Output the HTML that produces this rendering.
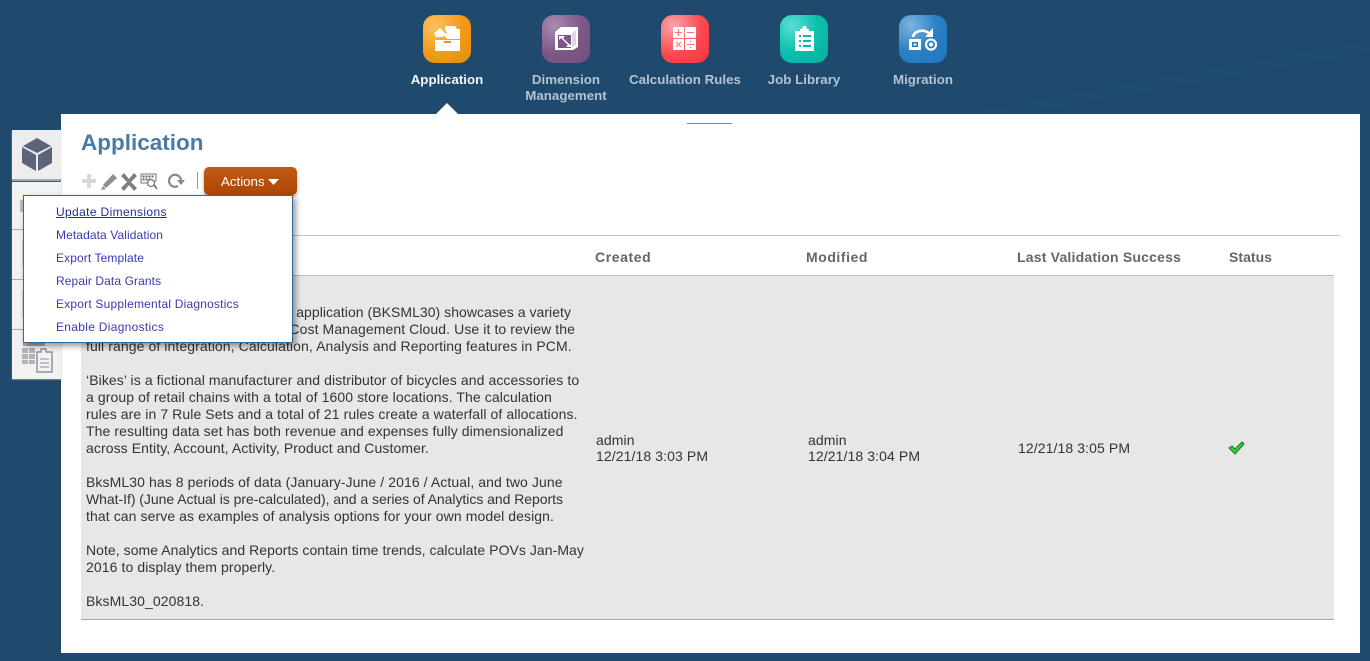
<!DOCTYPE html>
<html><head><meta charset="utf-8"><title>Application</title>
<style>
html,body{margin:0;padding:0}
body{width:1370px;height:661px;position:relative;overflow:hidden;background:#1f4a6e;font-family:"Liberation Sans",Arial,sans-serif;}
.a{position:absolute;white-space:nowrap}
.ic{position:absolute;top:15px;width:48px;height:48px;border-radius:12px;overflow:hidden}
.ic svg{position:absolute;left:0;top:0}
.nl{position:absolute;top:72px;width:140px;text-align:center;font-size:13.3px;line-height:16px;font-weight:bold;color:#b4c2d1;letter-spacing:.02px}
.t{position:absolute;left:86px;font-size:14px;line-height:17px;color:#333;white-space:nowrap;letter-spacing:.09px}
.th{position:absolute;top:249px;font-size:14px;line-height:16px;font-weight:bold;color:#666;letter-spacing:.2px;white-space:nowrap}
.m{position:absolute;left:32px;font-size:12px;line-height:14px;color:#3a3ab0;white-space:nowrap;letter-spacing:.2px}
.d{position:absolute;font-size:14px;line-height:16px;color:#333;white-space:nowrap;letter-spacing:.1px}
</style></head>
<body>
<svg class="a" style="left:0;top:0" width="1370" height="114"><path d="M960 114L1370 40V52L1020 114Z" fill="#24507a" opacity=".25"/></svg>

<div class="ic" style="left:423px;background:radial-gradient(circle at 25% 22%,#ffc05e 0,#f59c1c 50%,#e58a08 100%)">
<svg width="48" height="48"><path d="M22 11h10l2 3h3v10H24l-3-4 3-2-2-3z" fill="#fff"/><path d="M11 18l6-5 6 6-3 3h-7z" fill="#fff"/><path d="M12 25h25v11H12z" fill="#fff"/><path d="M21 26h7v2h-7z" fill="#ef9210"/></svg></div>
<div class="ic" style="left:542px;background:radial-gradient(circle at 25% 22%,#a98bb0 0,#7d5686 55%,#74507e 100%)">
<svg width="48" height="48"><path d="M13 17l6-5h17v20l-5 3H13z" fill="#fff"/><path d="M16 20h13v13H16z" fill="#7d5686"/><path d="M30 18l4-3v15l-4 2z" fill="#7d5686" opacity=".25"/><path d="M17 21h6l-2 2 7 7 2-2v4h-6l2-2-7-7-2 2z" fill="#fff"/></svg></div>
<div class="ic" style="left:661px;background:radial-gradient(circle at 25% 22%,#fda4aa 0,#fb4a52 55%,#f8333c 100%)">
<svg width="48" height="48"><path d="M12 12h11v11H12zM24 12h11v11H24zM12 24h11v11H12zM24 24h11v11H24z" fill="#fff"/><path d="M14 17.500h7M17.500 14v7M26 17.500h7M15 27l5 5M20 27l-5 5M26 29.500h7" stroke="#fb7078" fill="none"/><path d="M29 26h1v1h-1zM29 32h1v1h-1z" fill="#fb7078"/></svg></div>
<div class="ic" style="left:780px;background:radial-gradient(circle at 25% 22%,#58e0d2 0,#0cbfad 50%,#0aae9e 100%)">
<svg width="48" height="48"><path d="M15 16h5v-2h2l1-3h3l1 3h2v2h5v20H15z" fill="#fff"/><path d="M19 20h2v2h-2zM23 20h8v2h-8zM19 25h2v2h-2zM23 25h8v2h-8zM19 30h2v2h-2zM23 30h8v2h-8z" fill="#0cb8a8"/></svg></div>
<div class="ic" style="left:899px;background:radial-gradient(circle at 25% 22%,#7cb4e0 0,#2a80c4 50%,#1f76be 100%)">
<svg width="48" height="48"><path d="M10 24h12v11H10z" fill="#fff"/><path d="M13 27h6v5h-6z" fill="#2078c0"/><path d="M14.500 28.500h3v2h-3z" fill="#fff"/><circle cx="32" cy="29.500" r="5" fill="#2078c0" stroke="#fff" stroke-width="2.200"/><circle cx="32" cy="29.500" r="2.200" fill="#fff"/><path d="M14 22c1-6 10-9 17-3" fill="none" stroke="#fff" stroke-width="2.600"/><path d="M34 13v9h-8z" fill="#fff"/></svg></div>

<div class="nl" style="left:377px;color:#f3f5f7">Application</div>
<div class="nl" style="left:496px">Dimension<br>Management</div>
<div class="nl" style="left:615px">Calculation Rules</div>
<div class="nl" style="left:734px">Job Library</div>
<div class="nl" style="left:853px">Migration</div>

<div class="a" style="left:61px;top:114px;width:1299px;height:539px;background:#fff"></div>
<svg class="a" style="left:434px;top:102px" width="26" height="13"><path d="M1 13L13 1l12 12z" fill="#fff"/></svg>
<div class="a" style="left:687px;top:123px;width:45px;height:1px;background:#8a8a8a"></div>

<div class="a" style="left:12px;top:130px;width:49px;height:49px;background:#ededed;border-bottom:1px solid #aaa;box-shadow:0 1px 1px #bbb"></div>
<div class="a" style="left:12px;top:182px;width:49px;height:197px;background:#f2f2f2;box-shadow:0 1px 1px #888"></div>
<div class="a" style="left:12px;top:229px;width:49px;height:1px;background:#aaa"></div>
<div class="a" style="left:12px;top:279px;width:49px;height:1px;background:#aaa"></div>
<div class="a" style="left:12px;top:329px;width:49px;height:1px;background:#aaa"></div>
<div class="a" style="left:20px;top:200px;width:3px;height:12px;background:#bbb"></div>
<div class="a" style="left:22px;top:240px;width:1px;height:26px;background:#d4d4d4"></div>
<div class="a" style="left:22px;top:291px;width:1px;height:26px;background:#d4d4d4"></div>
<div class="a" style="left:23px;top:343px;width:22px;height:3px;background:#aaa"></div>
<svg class="a" style="left:22px;top:138px" width="32" height="34"><path d="M15 0L29 8 15 15 1 8z" fill="#5b6478"/><path d="M0 9l14 8v16L0 25zM30 9l-14 8v16l14-8z" fill="#5b6478"/></svg>
<svg class="a" style="left:22px;top:346px" width="32" height="28"><path d="M0 2h6v5H0zM7 2h6v5H7zM0 8h6v5H0zM7 8h6v5H7zM0 14h6v4H0zM7 14h6v4H7z" fill="#b0b3b9"/><path d="M15 6h4V3h5v3h6v20H15z" fill="#f2f2f2" stroke="#8a8f99" stroke-width="1.400"/><path d="M18 13h9M18 17h9M18 21h9" stroke="#8a8f99"/></svg>

<div class="a" style="left:81px;top:129px;font-size:22.500px;line-height:28px;font-weight:bold;color:#4a7aa6">Application</div>

<svg class="a" style="left:80px;top:170px" width="110" height="22">
<path d="M7 4h4v5h5v4h-5v5H7v-5H2V9h5z" fill="#d8d8d8"/>
<path d="M23 15L33 4l4 4-11 10z" fill="#8f8f8f"/><path d="M21 20l2-4 3 3z" fill="#8f8f8f"/>
<path d="M44 3l5 6 5-6 3 3-6 6 6 6-3 3-5-6-5 6-3-3 6-6-6-6z" fill="#7e7e7e"/>
<path d="M61 4h15v7h-7v2h-8z" fill="#fff" stroke="#777"/><path d="M62.500 5.500h2v2h-2zM65.500 5.500h2v2h-2zM68.500 5.500h2v2h-2zM71.500 5.500h2v2h-2zM62.500 8.500h2v2h-2zM65.500 8.500h2v2h-2zM68.500 8.500h2v2h-2z" fill="#666"/><circle cx="71" cy="13" r="3.500" fill="#fff" stroke="#777" stroke-width="1.300"/><path d="M74 15l3 4" stroke="#777" stroke-width="1.800"/>
<path d="M98 16A6 6 0 1 1 101 10" fill="none" stroke="#8a8a8a" stroke-width="2.200"/><path d="M97 10h8l-4 5z" fill="#8a8a8a"/>
</svg>
<div class="a" style="left:197px;top:172px;width:1px;height:17px;background:#999"></div>
<div class="a" style="left:204px;top:167px;width:93px;height:28px;border-radius:5px;background:linear-gradient(#c15b14,#ad4504);box-shadow:0 2px 3px rgba(0,0,0,.35);color:#fff;font-size:13.300px;line-height:29px"><span class="a" style="left:17px">Actions</span><svg class="a" style="left:64px;top:12px" width="11" height="6"><path d="M0 0h11L5.500 6z" fill="#fff"/></svg></div>

<div class="a" style="left:81px;top:235px;width:1259px;height:1px;background:#c4c4c4"></div>
<div class="a" style="left:81px;top:275px;width:1253px;height:345px;background:#e7e7e7;border-top:1px solid #bdbdbd;border-bottom:1px solid #a8a8a8;box-sizing:border-box"></div>

<div class="th" style="left:595px;letter-spacing:.6px">Created</div>
<div class="th" style="left:806px;letter-spacing:.55px">Modified</div>
<div class="th" style="left:1017px">Last Validation Success</div>
<div class="th" style="left:1229px;letter-spacing:.05px">Status</div>

<div class="t" style="top:304px;left:auto;right:799px;letter-spacing:.04px">The Bikes sample application (BKSML30) showcases a variety</div>
<div class="t" style="top:321px;left:auto;right:795px">of features in Profitability and Cost Management Cloud. Use it to review the</div>
<div class="t" style="top:338px">full range of integration, Calculation, Analysis and Reporting features in PCM.</div>
<div class="t" style="top:372px">‘Bikes’ is a fictional manufacturer and distributor of bicycles and accessories to</div>
<div class="t" style="top:389px">a group of retail chains with a total of 1600 store locations. The calculation</div>
<div class="t" style="top:406px">rules are in 7 Rule Sets and a total of 21 rules create a waterfall of allocations.</div>
<div class="t" style="top:423px">The resulting data set has both revenue and expenses fully dimensionalized</div>
<div class="t" style="top:440px">across Entity, Account, Activity, Product and Customer.</div>
<div class="t" style="top:474px">BksML30 has 8 periods of data (January-June / 2016 / Actual, and two June</div>
<div class="t" style="top:491px;letter-spacing:-.04px">What-If) (June Actual is pre-calculated), and a series of Analytics and Reports</div>
<div class="t" style="top:508px">that can serve as examples of analysis options for your own model design.</div>
<div class="t" style="top:542px;letter-spacing:.05px">Note, some Analytics and Reports contain time trends, calculate POVs Jan-May</div>
<div class="t" style="top:559px">2016 to display them properly.</div>
<div class="t" style="top:593px">BksML30_020818.</div>

<div class="d" style="left:596px;top:432px">admin</div>
<div class="d" style="left:596px;top:448px">12/21/18 3:03 PM</div>
<div class="d" style="left:808px;top:432px">admin</div>
<div class="d" style="left:808px;top:448px">12/21/18 3:04 PM</div>
<div class="d" style="left:1018px;top:440px">12/21/18 3:05 PM</div>
<svg class="a" style="left:1228px;top:440px" width="18" height="15"><path d="M1 8l3-2 3 3 7-7 2 2-9 10z" fill="#3ccc3c" stroke="#0f7d1f" stroke-width="1"/></svg>

<div class="a" style="left:23px;top:195px;width:270px;height:148px;background:#fff;border:1px solid #2f6a9e;box-sizing:border-box;box-shadow:3px 3px 6px rgba(0,0,0,.4)">
<div class="m" style="top:9px;color:#1f2f8e;text-decoration:underline;letter-spacing:.36px">Update Dimensions</div>
<div class="m" style="top:32px;letter-spacing:.1px">Metadata Validation</div>
<div class="m" style="top:55px;letter-spacing:.1px">Export Template</div>
<div class="m" style="top:78px;letter-spacing:.1px">Repair Data Grants</div>
<div class="m" style="top:101px">Export Supplemental Diagnostics</div>
<div class="m" style="top:124px;letter-spacing:.3px">Enable Diagnostics</div>
</div>
</body></html>
